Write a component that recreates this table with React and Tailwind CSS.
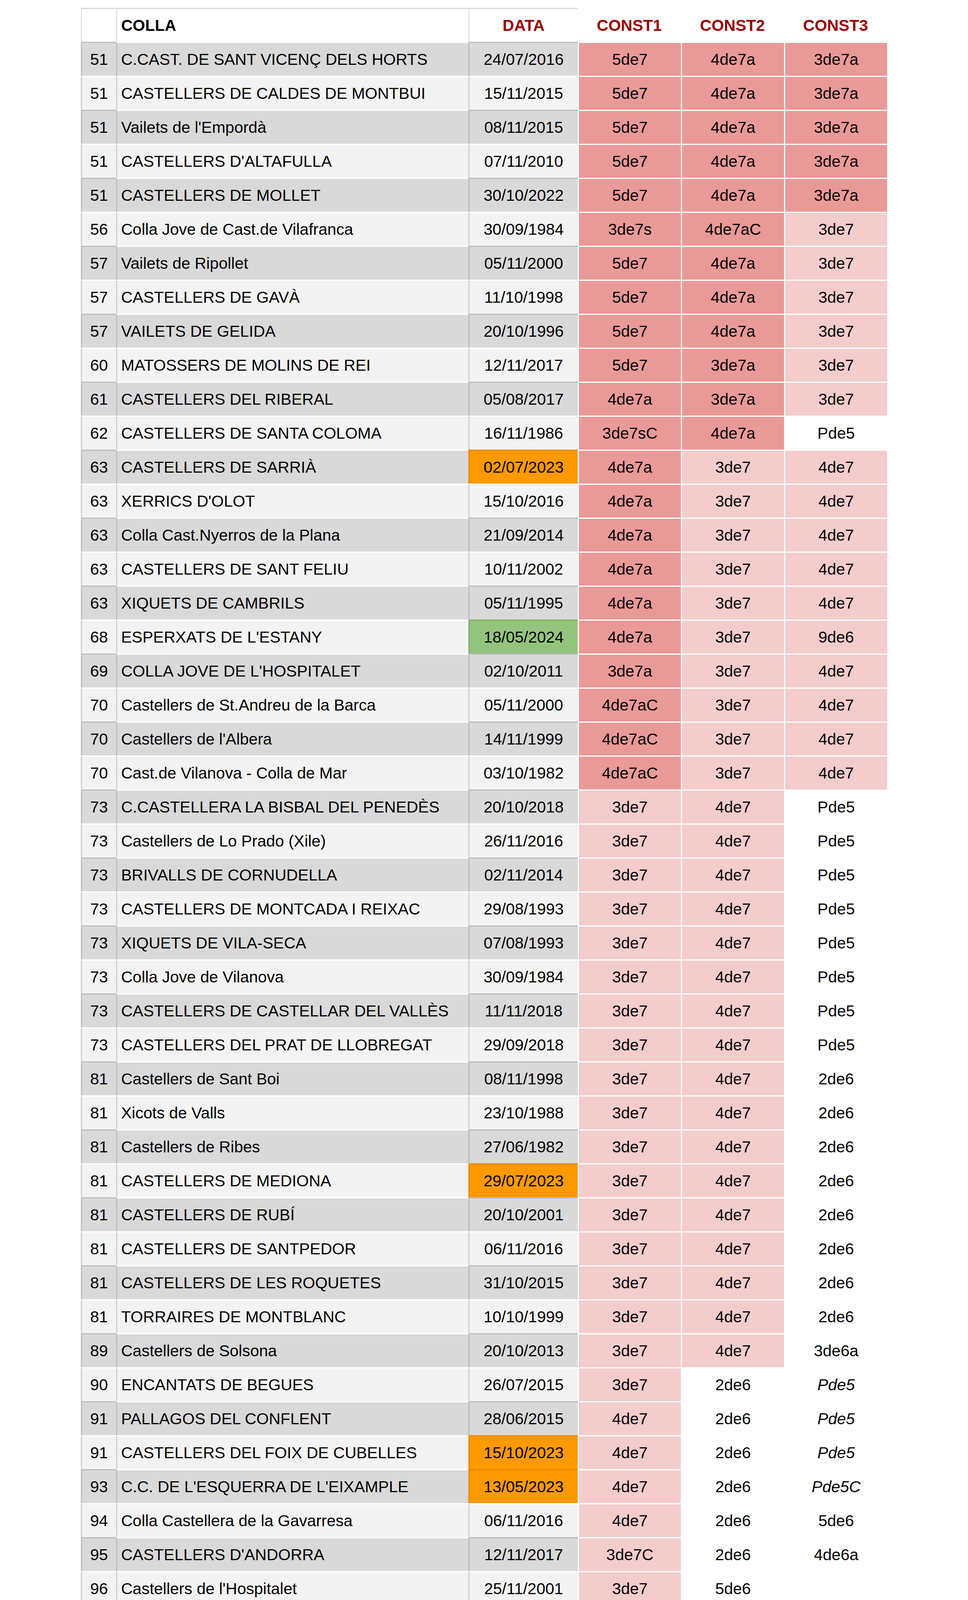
import React from "react";

const rows = [
  ["51", "C.CAST. DE SANT VICENÇ DELS HORTS", "24/07/2016", "", "5de7", "4de7a", "3de7a", "ddd"],
  ["51", "CASTELLERS DE CALDES DE MONTBUI", "15/11/2015", "", "5de7", "4de7a", "3de7a", "ddd"],
  ["51", "Vailets de l'Empordà", "08/11/2015", "", "5de7", "4de7a", "3de7a", "ddd"],
  ["51", "CASTELLERS D'ALTAFULLA", "07/11/2010", "", "5de7", "4de7a", "3de7a", "ddd"],
  ["51", "CASTELLERS DE MOLLET", "30/10/2022", "", "5de7", "4de7a", "3de7a", "ddd"],
  ["56", "Colla Jove de Cast.de Vilafranca", "30/09/1984", "", "3de7s", "4de7aC", "3de7", "ddl"],
  ["57", "Vailets de Ripollet", "05/11/2000", "", "5de7", "4de7a", "3de7", "ddl"],
  ["57", "CASTELLERS DE GAVÀ", "11/10/1998", "", "5de7", "4de7a", "3de7", "ddl"],
  ["57", "VAILETS DE GELIDA", "20/10/1996", "", "5de7", "4de7a", "3de7", "ddl"],
  ["60", "MATOSSERS DE MOLINS DE REI", "12/11/2017", "", "5de7", "3de7a", "3de7", "ddl"],
  ["61", "CASTELLERS DEL RIBERAL", "05/08/2017", "", "4de7a", "3de7a", "3de7", "ddl"],
  ["62", "CASTELLERS DE SANTA COLOMA", "16/11/1986", "", "3de7sC", "4de7a", "Pde5", "ddw"],
  ["63", "CASTELLERS DE SARRIÀ", "02/07/2023", "o", "4de7a", "3de7", "4de7", "dll"],
  ["63", "XERRICS D'OLOT", "15/10/2016", "", "4de7a", "3de7", "4de7", "dll"],
  ["63", "Colla Cast.Nyerros de la Plana", "21/09/2014", "", "4de7a", "3de7", "4de7", "dll"],
  ["63", "CASTELLERS DE SANT FELIU", "10/11/2002", "", "4de7a", "3de7", "4de7", "dll"],
  ["63", "XIQUETS DE CAMBRILS", "05/11/1995", "", "4de7a", "3de7", "4de7", "dll"],
  ["68", "ESPERXATS DE L'ESTANY", "18/05/2024", "g", "4de7a", "3de7", "9de6", "dll"],
  ["69", "COLLA JOVE DE L'HOSPITALET", "02/10/2011", "", "3de7a", "3de7", "4de7", "dll"],
  ["70", "Castellers de St.Andreu de la Barca", "05/11/2000", "", "4de7aC", "3de7", "4de7", "dll"],
  ["70", "Castellers de l'Albera", "14/11/1999", "", "4de7aC", "3de7", "4de7", "dll"],
  ["70", "Cast.de Vilanova - Colla de Mar", "03/10/1982", "", "4de7aC", "3de7", "4de7", "dll"],
  ["73", "C.CASTELLERA LA BISBAL DEL PENEDÈS", "20/10/2018", "", "3de7", "4de7", "Pde5", "llw"],
  ["73", "Castellers de Lo Prado (Xile)", "26/11/2016", "", "3de7", "4de7", "Pde5", "llw"],
  ["73", "BRIVALLS DE CORNUDELLA", "02/11/2014", "", "3de7", "4de7", "Pde5", "llw"],
  ["73", "CASTELLERS DE MONTCADA I REIXAC", "29/08/1993", "", "3de7", "4de7", "Pde5", "llw"],
  ["73", "XIQUETS DE VILA-SECA", "07/08/1993", "", "3de7", "4de7", "Pde5", "llw"],
  ["73", "Colla Jove de Vilanova", "30/09/1984", "", "3de7", "4de7", "Pde5", "llw"],
  ["73", "CASTELLERS DE CASTELLAR DEL VALLÈS", "11/11/2018", "", "3de7", "4de7", "Pde5", "llw"],
  ["73", "CASTELLERS DEL PRAT DE LLOBREGAT", "29/09/2018", "", "3de7", "4de7", "Pde5", "llw"],
  ["81", "Castellers de Sant Boi", "08/11/1998", "", "3de7", "4de7", "2de6", "llw"],
  ["81", "Xicots de Valls", "23/10/1988", "", "3de7", "4de7", "2de6", "llw"],
  ["81", "Castellers de Ribes", "27/06/1982", "", "3de7", "4de7", "2de6", "llw"],
  ["81", "CASTELLERS DE MEDIONA", "29/07/2023", "o", "3de7", "4de7", "2de6", "llw"],
  ["81", "CASTELLERS DE RUBÍ", "20/10/2001", "", "3de7", "4de7", "2de6", "llw"],
  ["81", "CASTELLERS DE SANTPEDOR", "06/11/2016", "", "3de7", "4de7", "2de6", "llw"],
  ["81", "CASTELLERS DE LES ROQUETES", "31/10/2015", "", "3de7", "4de7", "2de6", "llw"],
  ["81", "TORRAIRES DE MONTBLANC", "10/10/1999", "", "3de7", "4de7", "2de6", "llw"],
  ["89", "Castellers de Solsona", "20/10/2013", "", "3de7", "4de7", "3de6a", "llw"],
  ["90", "ENCANTATS DE BEGUES", "26/07/2015", "", "3de7", "2de6", "Pde5", "lwwi"],
  ["91", "PALLAGOS DEL CONFLENT", "28/06/2015", "", "4de7", "2de6", "Pde5", "lwwi"],
  ["91", "CASTELLERS DEL FOIX DE CUBELLES", "15/10/2023", "o", "4de7", "2de6", "Pde5", "lwwi"],
  ["93", "C.C. DE L'ESQUERRA DE L'EIXAMPLE", "13/05/2023", "o", "4de7", "2de6", "Pde5C", "lwwi"],
  ["94", "Colla Castellera de la Gavarresa", "06/11/2016", "", "4de7", "2de6", "5de6", "lww"],
  ["95", "CASTELLERS D'ANDORRA", "12/11/2017", "", "3de7C", "2de6", "4de6a", "lww"],
  ["96", "Castellers de l'Hospitalet", "25/11/2001", "", "3de7", "5de6", "", "lww"],
  ["97", "Angelets del Vallespir", "09/09/2007", "", "3de7", "", "", "lww"],
];

function constBg(c) {
  if (c === "d") return "bg-[#ea9999]";
  if (c === "l") return "bg-[#f4cccc]";
  return "bg-white";
}

function Row({ r, idx, last }) {
  const [num, name, date, dateKind, c1, c2, c3, colors] = r;
  const grey = idx % 2 === 0;
  const italic3 = colors.length > 3;
  const h = last ? "h-[90px]" : "h-[87px]";
  const bottom = last ? "border-b-[3px] border-b-[#b7b7b7]" : "";
  const rowBase = grey
    ? "bg-[#d9d9d9] border-l-[#bdbdbd]"
    : "bg-[#f3f3f3] border-l-[#cfcfcf] border-t-white";
  const numCls = grey ? "border-t-[#bdbdbd]" : "";
  const nameCls = grey ? "border-t-white" : "";
  let dateCls;
  if (dateKind === "o") dateCls = "bg-[#ff9900] border-t-[#e68a00] border-l-[#e68a00]";
  else if (dateKind === "g") dateCls = "bg-[#93c47d] border-t-[#7fae69] border-l-[#7fae69]";
  else dateCls = grey ? "bg-[#d9d9d9] border-l-[#bdbdbd] border-t-[#bdbdbd]" : "bg-[#f3f3f3] border-l-[#cfcfcf] border-t-white";

  return (
    <>
      <div className={`${h} ${rowBase} ${numCls} ${bottom} border-t-[3px] border-l-[3px] flex items-center justify-center`}>
        {num}
      </div>
      <div className={`${h} ${rowBase} ${nameCls} ${bottom} border-t-[3px] border-l-[3px] flex items-center pl-[10px] whitespace-nowrap`}>
        {name}
      </div>
      <div className={`${h} ${dateCls} ${bottom} border-t-[3px] border-l-[3px] flex items-center justify-center`}>
        {date}
      </div>
      <div className={`h-[87px] ${constBg(colors[0])} border-t-[3px] border-l-[3px] border-white flex items-center justify-center`}>
        {c1}
      </div>
      <div className={`h-[87px] ${constBg(colors[1])} border-t-[3px] border-l-[3px] border-white flex items-center justify-center`}>
        {c2}
      </div>
      <div className={`h-[87px] ${constBg(colors[2])} border-t-[3px] border-l-[3px] border-white flex items-center justify-center ${italic3 ? "italic" : ""}`}>
        {c3}
      </div>
    </>
  );
}

export default function App() {
  return (
    <div className="w-full bg-white pt-[20px] pb-[20px] pl-[207px] font-['Liberation_Sans',Arial,sans-serif] text-[41px] leading-none text-black">
      <div className="grid grid-cols-[90px_902px_280px_264px_264px_264px] w-[2064px]">
        <div className="h-[87px] bg-white border-t-[3px] border-l-[3px] border-t-[#d9d9d9] border-l-[#e0e0e0]"></div>
        <div className="h-[87px] bg-white border-t-[3px] border-l-[3px] border-t-[#d9d9d9] border-l-[#e0e0e0] flex items-center pl-[10px] font-bold">
          COLLA
        </div>
        <div className="h-[87px] bg-white border-t-[3px] border-l-[3px] border-t-[#d9d9d9] border-l-[#e0e0e0] flex items-center justify-center font-bold text-[#990000]">
          DATA
        </div>
        <div className="h-[87px] bg-white border-t-[3px] border-white flex items-center justify-center font-bold text-[#990000]">
          CONST1
        </div>
        <div className="h-[87px] bg-white border-t-[3px] border-white flex items-center justify-center font-bold text-[#990000]">
          CONST2
        </div>
        <div className="h-[87px] bg-white border-t-[3px] border-white flex items-center justify-center font-bold text-[#990000]">
          CONST3
        </div>
        {rows.map((r, i) => (
          <Row key={i} r={r} idx={i} last={i === rows.length - 1} />
        ))}
      </div>
    </div>
  );
}
